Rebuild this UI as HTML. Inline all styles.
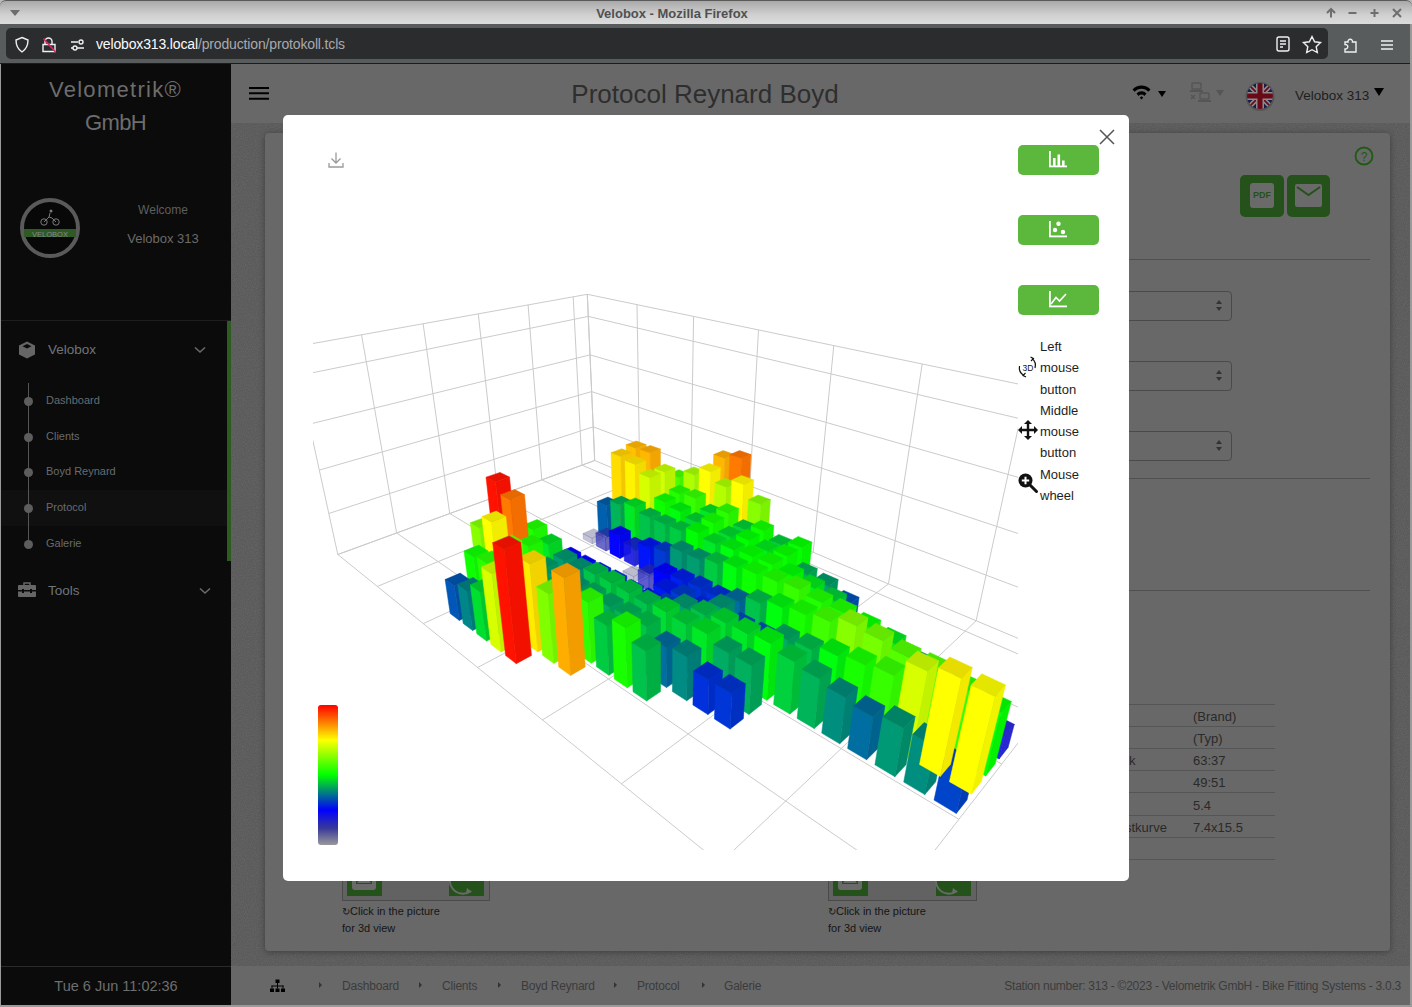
<!DOCTYPE html>
<html><head><meta charset="utf-8">
<style>
*{box-sizing:border-box}
html,body{margin:0;padding:0;width:1412px;height:1007px;overflow:hidden;background:#b9b9b9;font-family:"Liberation Sans",sans-serif}
.a{position:absolute}
#title{left:0;top:0;width:1412px;height:24px;background:linear-gradient(#a9a9a9,#d0d0d0 60%,#dcdcdc);border-top:1px solid #5a5a5a;border-radius:6px 6px 0 0}
#title .t{left:0;width:1344px;top:5px;text-align:center;font-size:13px;font-weight:bold;color:#505050}
#toolbar{left:0;top:24px;width:1412px;height:40px;background:#585c5d}
#url{left:6px;top:28px;width:1322px;height:31px;background:#2b2c2e;border-radius:5px}
#urltext{left:96px;top:36px;font-size:14px;letter-spacing:-0.15px;color:#fbfbfe;white-space:nowrap}
#urltext span{color:#a9a9ad}
#side{left:1px;top:64px;width:230px;height:941px;background:#0b0b0b}
#header{left:231px;top:64px;width:1179px;height:59px;background:#686868}
#content{left:231px;top:123px;width:1179px;height:843px;background:#5c5c5c}
#card{left:265px;top:133px;width:1125px;height:818px;background:#686868;border-radius:4px;box-shadow:0 1px 6px rgba(0,0,0,0.35)}
#footer{left:231px;top:966px;width:1179px;height:39px;background:#686868}
#modal{left:283px;top:115px;width:846px;height:766px;background:#fff;border-radius:5px}
.btn{left:1018px;width:81px;height:30px;background:#5cb83c;border-radius:5px}
.help{left:1040px;font-size:13px;color:#1e1e1e;line-height:21.3px}
.side-t{color:#6e6e6e}
.sub{left:46px;font-size:11px;color:#666b70}
.dot{left:24px;width:9px;height:9px;border-radius:50%;background:#5d5d5d}
.bc{top:979px;font-size:12px;letter-spacing:-0.2px;color:#3b3b3b;white-space:nowrap}
.bca{top:982px;width:0;height:0;border-left:3px solid #333;border-top:3px solid transparent;border-bottom:3px solid transparent}
.tr{left:1129px;width:146px;height:1px;background:#555}
.tv{left:1193px;font-size:13px;color:#2a2a2a}
</style></head><body>
<!-- window title -->
<div class="a" id="title"><div class="a t">Velobox - Mozilla Firefox</div></div>
<svg class="a" style="left:8px;top:8px" width="14" height="10"><path d="M2 2 L12 2 L7 8 Z" fill="#6c6c6c"/></svg>
<svg class="a" style="left:1320px;top:4px" width="90" height="18" fill="none" stroke="#6e6e6e" stroke-width="2">
 <path d="M11 13.5 V5.5 M7 9 L11 5 L15 9"/><path d="M28.5 9 H36.5"/><path d="M50.5 9 H58.5 M54.5 5 V13"/><path d="M73 5 L81 13 M81 5 L73 13"/>
</svg>
<!-- toolbar -->
<div class="a" id="toolbar"></div>
<div class="a" id="url"></div>
<svg class="a" style="left:14px;top:35px" width="80" height="20" fill="none" stroke="#f0f0f0" stroke-width="1.4">
 <path d="M8 2.5 L14 5 Q14 13 8 17 Q2 13 2 5 Z"/>
 <path d="M31 9 V6.5 A3.5 3.5 0 0 1 38 6.5 V9 M29 9.5 H41 V16.5 H29 Z"/>
 <path d="M29.5 3.5 L41.5 17" stroke="#e0245e" stroke-width="1.6"/>
 <path d="M57 7 H64 M57 13 H59 M63 13 H70" /><circle cx="67" cy="7" r="2"/><circle cx="61" cy="13" r="2"/>
</svg>
<div class="a" id="urltext">velobox313.local<span>/production/protokoll.tcls</span></div>
<svg class="a" style="left:1272px;top:33px" width="128" height="24" fill="none" stroke="#f0f0f0" stroke-width="1.4">
 <rect x="5" y="4" width="12" height="14" rx="2"/><path d="M8 8 H14 M8 11 H14 M8 14 H11"/>
 <path d="M40 3.5 L42.6 8.8 L48.5 9.6 L44.2 13.7 L45.3 19.5 L40 16.7 L34.7 19.5 L35.8 13.7 L31.5 9.6 L37.4 8.8 Z"/>
 <path d="M73 9 H76 A2.3 2.3 0 1 1 80.5 9 H84 V19 H73 V16 A2.3 2.3 0 1 0 73 11.5 Z"/>
 <path d="M109 8 H121 M109 12 H121 M109 16 H121"/>
</svg>
<!-- page -->
<div class="a" id="side"></div><div class="a" style="left:0;top:63px;width:1412px;height:1px;background:#1c1c1c"></div>
<div class="a" id="header"></div>
<div class="a" id="content"></div><svg class="a" style="left:231px;top:123px" width="1179" height="843"><filter id="nz"><feTurbulence type="fractalNoise" baseFrequency="0.9" numOctaves="2" seed="3"/><feColorMatrix values="0 0 0 0 0.36  0 0 0 0 0.36  0 0 0 0 0.36  0 0 0 -1.6 1.1"/></filter><rect width="1179" height="843" fill="#5a5a5a"/><rect width="1179" height="843" filter="url(#nz)" opacity="0.18"/></svg>
<div class="a" id="card"></div>
<div class="a" id="footer"></div>
<div class="a" style="left:0;top:64px;width:1px;height:943px;background:#9a9a9a"></div>
<div class="a" style="left:1410px;top:24px;width:2px;height:983px;background:#9a9a9a"></div>
<div class="a" style="left:0;top:1005px;width:1412px;height:2px;background:#9a9a9a"></div>


<!-- sidebar content -->
<div class="a" style="left:0;top:73px;width:231px;text-align:center;font-size:22px;line-height:33px;color:#6d6d6d"><span style="letter-spacing:1.3px">Velometrik®</span><br><span style="letter-spacing:-0.6px">GmbH</span></div>
<svg class="a" style="left:19px;top:197px" width="62" height="62">
 <circle cx="31" cy="31" r="28" fill="#080808" stroke="#5a5a5a" stroke-width="4"/>
 <rect x="5" y="32" width="52" height="8" fill="#2f5a25"/>
 <text x="31" y="39.5" text-anchor="middle" font-size="7.5" font-family="Liberation Sans" fill="#8a8a8a">VELOBOX</text>
 <g fill="none" stroke="#7a7a7a" stroke-width="1"><circle cx="25" cy="25" r="3.2"/><circle cx="37" cy="25" r="3.2"/><path d="M25 25 L30 20 L33 21 L37 25 M30 20 L31 16"/></g>
 <circle cx="32" cy="14" r="1.5" fill="#7a7a7a"/>
</svg>
<div class="a side-t" style="left:100px;top:203px;width:126px;text-align:center;font-size:12px;color:#5e5e5e">Welcome</div>
<div class="a side-t" style="left:100px;top:231px;width:126px;text-align:center;font-size:13px;color:#6a6a6a">Velobox 313</div>
<div class="a" style="left:1px;top:320px;width:230px;height:1px;background:#1e1e1e"></div>
<svg class="a" style="left:17px;top:340px" width="20" height="20"><path d="M10 1.5 L18 5.5 V14.5 L10 18.5 L2 14.5 V5.5 Z" fill="#666"/><path d="M10 4 L14.5 6.3 L10 8.6 L5.5 6.3 Z" fill="#0b0b0b"/></svg>
<div class="a" style="left:48px;top:342px;font-size:13.5px;color:#6f747a">Velobox</div>
<svg class="a" style="left:193px;top:345px" width="14" height="10"><path d="M2 2.5 L7 7 L12 2.5" stroke="#6a6a6a" stroke-width="1.6" fill="none"/></svg>
<div class="a" style="left:227px;top:321px;width:4px;height:240px;background:#2e5b22"></div>
<div class="a" style="left:1px;top:490px;width:226px;height:36px;background:#101010"></div>
<div class="a" style="left:28px;top:383px;width:1px;height:162px;background:#555"></div>
<div class="a dot" style="top:397px"></div><div class="a dot" style="top:433px"></div><div class="a dot" style="top:468px"></div><div class="a dot" style="top:504px"></div><div class="a dot" style="top:540px"></div>
<div class="a sub" style="top:394px">Dashboard</div>
<div class="a sub" style="top:430px">Clients</div>
<div class="a sub" style="top:465px">Boyd Reynard</div>
<div class="a sub" style="top:501px">Protocol</div>
<div class="a sub" style="top:537px">Galerie</div>
<svg class="a" style="left:17px;top:581px" width="20" height="18"><path d="M7 4 V2 H13 V4" stroke="#666" stroke-width="1.5" fill="none"/><rect x="1" y="4" width="18" height="12" rx="1" fill="#666"/><rect x="1" y="9" width="18" height="1.5" fill="#0b0b0b"/><rect x="5" y="8" width="2" height="4" fill="#0b0b0b"/><rect x="13" y="8" width="2" height="4" fill="#0b0b0b"/></svg>
<div class="a" style="left:48px;top:583px;font-size:13.5px;color:#6f747a">Tools</div>
<svg class="a" style="left:198px;top:586px" width="14" height="10"><path d="M2 2.5 L7 7 L12 2.5" stroke="#6a6a6a" stroke-width="1.6" fill="none"/></svg>
<div class="a" style="left:1px;top:966px;width:230px;height:1px;background:#2a2a2a"></div>
<div class="a" style="left:1px;top:978px;width:230px;text-align:center;font-size:14.5px;color:#6e6e6e">Tue 6 Jun 11:02:36</div>

<!-- header content -->
<svg class="a" style="left:248px;top:86px" width="22" height="16"><path d="M1 2 H21 M1 7.3 H21 M1 12.8 H21" stroke="#000" stroke-width="2"/></svg>
<div class="a" style="left:455px;top:79px;width:500px;text-align:center;font-size:26px;color:#2e2e2e">Protocol Reynard Boyd</div>
<svg class="a" style="left:1130px;top:83px" width="40" height="20"><path d="M2.5 6.5 A12 12 0 0 1 20.5 6.5 L18.3 8.8 A9 9 0 0 0 4.7 8.8 Z M6.5 10.6 A6.3 6.3 0 0 1 16.5 10.6 L14.3 12.9 A3.4 3.4 0 0 0 8.7 12.9 Z M9.8 14.8 L11.5 13.3 L13.2 14.8 L11.5 16.6 Z" fill="#000"/><path d="M28 8 H36 L32 14 Z" fill="#000"/></svg>
<svg class="a" style="left:1188px;top:82px" width="40" height="22" fill="#555"><rect x="4" y="1" width="9" height="6" rx="1" fill="none" stroke="#555" stroke-width="1.5"/><rect x="2" y="8" width="13" height="2"/><path d="M3 13 L7 17 M7 13 L3 17" stroke="#555" stroke-width="1.5"/><rect x="12" y="11" width="9" height="6" rx="1" fill="none" stroke="#555" stroke-width="1.5"/><rect x="10" y="18" width="13" height="2"/><path d="M28 8 H36 L32 14 Z" fill="#555"/></svg>
<svg class="a" style="left:1244px;top:80px" width="32" height="32"><defs><clipPath id="fc"><circle cx="16" cy="16" r="13"/></clipPath></defs><circle cx="16" cy="16.5" r="14.5" fill="#4a4a4a" opacity="0.6"/><g clip-path="url(#fc)"><rect width="32" height="32" fill="#141d4a"/><path d="M0 0 L32 32 M32 0 L0 32" stroke="#8a8a8a" stroke-width="5"/><path d="M0 0 L32 32 M32 0 L0 32" stroke="#6a0a18" stroke-width="1.6"/><path d="M16 0 V32 M0 16 H32" stroke="#8a8a8a" stroke-width="8"/><path d="M16 0 V32 M0 16 H32" stroke="#6a0a18" stroke-width="5"/></g></svg>
<div class="a" style="left:1295px;top:88px;font-size:13.5px;color:#1e1e1e">Velobox 313</div>
<svg class="a" style="left:1373px;top:87px" width="12" height="10"><path d="M1 1 H11 L6 9 Z" fill="#000"/></svg>

<!-- card content (behind modal, right side) -->
<svg class="a" style="left:1353px;top:145px" width="22" height="22"><circle cx="11" cy="11" r="8.5" fill="none" stroke="#215a14" stroke-width="1.8"/><text x="11" y="15.5" text-anchor="middle" font-size="12" font-family="Liberation Sans" fill="#215a14">?</text></svg>
<div class="a" style="left:1240px;top:175px;width:44px;height:42px;background:#24521a;border-radius:5px"></div>
<div class="a" style="left:1250px;top:183px;width:24px;height:25px;background:#6a6a6a;border-radius:3px;font-size:9px;font-weight:bold;color:#24521a;text-align:center;line-height:25px">PDF</div>
<div class="a" style="left:1287px;top:175px;width:43px;height:42px;background:#24521a;border-radius:5px"></div>
<svg class="a" style="left:1294px;top:183px" width="29" height="25"><rect x="1" y="1" width="27" height="23" rx="2" fill="#6a6a6a"/><path d="M3 4 L14.5 12 L26 4" stroke="#24521a" stroke-width="2" fill="none"/></svg>
<div class="a" style="left:1129px;top:259px;width:241px;height:1px;background:#505050"></div>
<div class="a" style="left:1100px;top:291px;width:132px;height:30px;border:1px solid #4a4a4a;border-radius:4px"></div>
<div class="a" style="left:1100px;top:361px;width:132px;height:30px;border:1px solid #4a4a4a;border-radius:4px"></div>
<div class="a" style="left:1100px;top:431px;width:132px;height:30px;border:1px solid #4a4a4a;border-radius:4px"></div>
<svg class="a" style="left:1214px;top:298px" width="10" height="160" fill="#333"><path d="M2 6 L5 2 L8 6 Z M2 9 L5 13 L8 9 Z"/><path transform="translate(0,70)" d="M2 6 L5 2 L8 6 Z M2 9 L5 13 L8 9 Z"/><path transform="translate(0,140)" d="M2 6 L5 2 L8 6 Z M2 9 L5 13 L8 9 Z"/></svg>
<div class="a" style="left:1100px;top:478px;width:270px;height:1px;background:#505050"></div>
<div class="a" style="left:1129px;top:590px;width:241px;height:1px;background:#505050"></div>
<div class="a tr" style="top:704px"></div><div class="a tr" style="top:726px"></div><div class="a tr" style="top:748px"></div><div class="a tr" style="top:770px"></div><div class="a tr" style="top:792px"></div><div class="a tr" style="top:815px"></div><div class="a tr" style="top:837px"></div><div class="a tr" style="top:859px"></div>
<div class="a tv" style="top:709px">(Brand)</div>
<div class="a tv" style="top:731px">(Typ)</div>
<div class="a tv" style="top:753px">63:37</div>
<div class="a tv" style="top:775px">49:51</div>
<div class="a tv" style="top:798px">5.4</div>
<div class="a tv" style="top:820px">7.4x15.5</div>
<div class="a tv" style="left:1129px;top:753px">k</div>
<div class="a tv" style="left:1125px;top:820px">stkurve</div>
<!-- thumbnails below modal -->
<div class="a" style="left:342px;top:870px;width:148px;height:31px;border:1px solid #4a4a4a;background:#626262"></div>
<div class="a" style="left:347px;top:870px;width:35px;height:26px;background:#24521a"></div>
<div class="a" style="left:449px;top:870px;width:35px;height:26px;background:#24521a"></div>
<div class="a" style="left:828px;top:870px;width:149px;height:31px;border:1px solid #4a4a4a;background:#626262"></div>
<div class="a" style="left:833px;top:870px;width:35px;height:26px;background:#24521a"></div>
<div class="a" style="left:936px;top:870px;width:35px;height:26px;background:#24521a"></div>

<svg class="a" style="left:347px;top:870px" width="140" height="26"><rect x="5" y="0" width="24" height="20" rx="3" fill="#6a6a6a"/><rect x="9" y="0" width="16" height="14" fill="#24521a"/><path d="M10 13 L15 6 L18 10 L20 8 L24 13 Z" fill="#6a6a6a"/><path d="M108 0 A12 12 0 0 0 124 21" stroke="#6a6a6a" stroke-width="2" fill="none"/><path d="M120 18 L125 22 L119 23" fill="#6a6a6a"/></svg>
<svg class="a" style="left:833px;top:870px" width="140" height="26"><rect x="5" y="0" width="24" height="20" rx="3" fill="#6a6a6a"/><rect x="9" y="0" width="16" height="14" fill="#24521a"/><path d="M10 13 L15 6 L18 10 L20 8 L24 13 Z" fill="#6a6a6a"/><path d="M108 0 A12 12 0 0 0 124 21" stroke="#6a6a6a" stroke-width="2" fill="none"/><path d="M120 18 L125 22 L119 23" fill="#6a6a6a"/></svg>
<div class="a" style="left:342px;top:903px;font-size:11px;line-height:17px;color:#151515"><span style="font-size:10px">&#8635;</span>Click in the picture<br>for 3d view</div>
<div class="a" style="left:828px;top:903px;font-size:11px;line-height:17px;color:#151515"><span style="font-size:10px">&#8635;</span>Click in the picture<br>for 3d view</div>
<!-- footer content -->
<svg class="a" style="left:270px;top:979px" width="15" height="14" fill="#000"><rect x="5.5" y="0.5" width="4" height="3.5"/><rect x="7" y="4" width="1" height="3"/><rect x="1.5" y="6.5" width="12" height="1"/><rect x="1.5" y="6.5" width="1" height="3"/><rect x="12.5" y="6.5" width="1" height="3"/><rect x="7" y="6.5" width="1" height="3"/><rect x="0" y="9.5" width="4" height="3.5"/><rect x="5.5" y="9.5" width="4" height="3.5"/><rect x="11" y="9.5" width="4" height="3.5"/></svg>
<div class="a bca" style="left:319px"></div><div class="a bc" style="left:342px">Dashboard</div>
<div class="a bca" style="left:419px"></div><div class="a bc" style="left:442px">Clients</div>
<div class="a bca" style="left:498px"></div><div class="a bc" style="left:521px">Boyd Reynard</div>
<div class="a bca" style="left:614px"></div><div class="a bc" style="left:637px">Protocol</div>
<div class="a bca" style="left:702px"></div><div class="a bc" style="left:724px">Galerie</div>
<div class="a bc" style="left:951px;width:450px;text-align:right;font-size:12px;letter-spacing:-0.25px">Station number: 313 - ©2023 - Velometrik GmbH - Bike Fitting Systems - 3.0.3</div>

<!-- modal -->
<div class="a" id="modal"></div>
<div class="a btn" style="top:145px"></div>
<div class="a btn" style="top:215px"></div>
<div class="a btn" style="top:285px"></div>
<!-- modal content -->
<svg class="a" style="left:1098px;top:128px" width="18" height="18"><path d="M2 2 L16 16 M16 2 L2 16" stroke="#555" stroke-width="1.5"/></svg>
<svg class="a" style="left:327px;top:151px" width="18" height="18"><path d="M9 1.5 V12 M4.5 7.5 L9 12 L13.5 7.5 M2 12 V16 H16 V12" stroke="#9a9a9a" stroke-width="1.3" fill="none"/></svg>
<svg class="a" style="left:1049px;top:151px" width="18" height="18" fill="#fff"><rect x="0" y="0" width="1.8" height="16"/><rect x="0" y="14.5" width="18" height="1.8"/><rect x="4" y="7" width="2.6" height="8"/><rect x="8.5" y="3.5" width="2.6" height="11.5"/><rect x="13" y="9.5" width="2.6" height="5.5"/></svg>
<svg class="a" style="left:1049px;top:221px" width="18" height="18" fill="#fff"><rect x="0" y="0" width="1.8" height="16"/><rect x="0" y="14.5" width="18" height="1.8"/><circle cx="9.5" cy="2.8" r="2.2"/><circle cx="6" cy="9" r="2.2"/><circle cx="14" cy="11" r="2.2"/></svg>
<svg class="a" style="left:1049px;top:291px" width="18" height="18"><rect x="0" y="0" width="1.8" height="16" fill="#fff"/><rect x="0" y="14.5" width="18" height="1.8" fill="#fff"/><path d="M2 13 L7 6.5 L10.5 10 L17 3" stroke="#fff" stroke-width="1.6" fill="none"/></svg>
<div class="a help" style="top:336px">Left<br>mouse<br>button<br>Middle<br>mouse<br>button<br>Mouse<br>wheel</div>
<svg class="a" style="left:1017px;top:356px" width="22" height="22"><path d="M15 2.5 A9 9 0 0 1 18 12" stroke="#111" stroke-width="1.2" fill="none"/><path d="M13.5 1 L16.5 2.5 L14 5" stroke="#111" stroke-width="1.1" fill="none"/><path d="M7 19.5 A9 9 0 0 1 2.5 10" stroke="#111" stroke-width="1.2" fill="none"/><path d="M9 21 L6 19.5 L8.5 17" stroke="#111" stroke-width="1.1" fill="none"/><text x="11" y="14.5" text-anchor="middle" font-size="8.5" font-family="Liberation Sans" fill="#111">3D</text></svg>
<svg class="a" style="left:1017px;top:419px" width="22" height="22" fill="#111"><path d="M11 1 L15 5 H12.2 V9.8 H17 V7 L21 11 L17 15 V12.2 H12.2 V17 H15 L11 21 L7 17 H9.8 V12.2 H5 V15 L1 11 L5 7 V9.8 H9.8 V5 H7 Z"/></svg>
<svg class="a" style="left:1017px;top:472px" width="22" height="22"><circle cx="8.5" cy="8.5" r="7" fill="#111"/><path d="M13 13 L19.5 19.5" stroke="#111" stroke-width="3" stroke-linecap="round"/><path d="M8.5 4.8 V12.2 M4.8 8.5 H12.2" stroke="#fff" stroke-width="2"/></svg>
<!-- visualMap -->
<div class="a" style="left:318px;top:705px;width:20px;height:140px;border-radius:3px;background:linear-gradient(#ff0000 0%,#ffff00 25%,#00ff00 50%,#0000ff 75%,#38389a 88%,#999999 100%)"></div>

<!--CHART--><svg class="a" style="left:313px;top:115px" width="705" height="735"><g stroke-width="0.5" stroke-linejoin="round"><path d="M24.8 439.5L-20.6 232.2M83.6 418.0L48.5 219.8M136.7 398.5L110.1 208.7M184.9 380.9L165.3 198.8M228.8 364.8L215.1 189.9M269.0 350.1L260.2 181.8M281.7 345.5L274.3 179.3M24.8 439.5L281.7 345.5M15.8 398.5L280.2 311.8M6.3 355.1L278.6 276.6M-3.7 309.2L277.0 239.9M-14.3 260.6L275.3 201.4M-20.6 232.2L274.3 179.3M281.7 345.5L274.3 179.3M326.8 364.4L324.0 189.6M377.5 385.7L380.6 201.4M434.8 409.8L445.5 214.9M500.2 437.3L520.8 230.6M575.5 468.9L609.2 249.0M663.1 505.8L714.4 270.9M766.3 549.1L841.8 297.4M281.7 345.5L766.3 549.1M280.2 311.8L780.8 500.8M278.6 276.6L796.4 448.9M277.0 239.9L813.1 393.2M275.3 201.4L831.1 333.1M274.3 179.3L841.8 297.4M24.8 439.5L281.7 345.5M64.3 471.4L326.8 364.4M110.3 508.6L377.5 385.7M164.6 552.5L434.8 409.8M229.5 604.9L500.2 437.3M308.5 668.8L575.5 468.9M407.0 748.3L663.1 505.8M532.8 850.1L766.3 549.1M24.8 439.5L532.8 850.1M83.6 418.0L594.8 770.2M136.7 398.5L645.9 704.3M184.9 380.9L688.8 649.0M228.8 364.8L725.3 601.9M269.0 350.1L756.8 561.4" stroke="#cbcbcb" stroke-width="1" fill="none"/><path d="M314.9,404.0L324.1,408.4L322.8,333.4L313.1,329.7Z" fill="#ffc100" stroke="#ffc100"/><path d="M324.1,408.4L334.0,403.9L333.1,329.6L322.8,333.4Z" fill="#f2ad00" stroke="#f2ad00"/><path d="M313.1,329.7L322.8,333.4L333.1,329.6L323.4,326.0Z" fill="#e6a400" stroke="#e6a400"/><path d="M300.5,410.4L309.7,415.0L307.7,341.6L298.0,337.7Z" fill="#ffdd00" stroke="#ffdd00"/><path d="M309.7,415.0L319.9,410.3L318.4,337.6L307.7,341.6Z" fill="#f2c600" stroke="#f2c600"/><path d="M298.0,337.7L307.7,341.6L318.4,337.6L308.7,333.8Z" fill="#e6bc00" stroke="#e6bc00"/><path d="M328.2,410.3L337.8,414.9L337.1,338.1L327.0,334.2Z" fill="#ffb700" stroke="#ffb700"/><path d="M337.8,414.9L347.6,410.2L347.4,334.1L337.1,338.1Z" fill="#f2a400" stroke="#f2a400"/><path d="M327.0,334.2L337.1,338.1L347.4,334.1L337.3,330.4Z" fill="#e69c00" stroke="#e69c00"/><path d="M355.9,410.2L365.8,414.7L366.3,362.9L356.0,358.8Z" fill="#4bff00" stroke="#4bff00"/><path d="M365.8,414.7L375.3,410.1L376.1,358.7L366.3,362.9Z" fill="#43f200" stroke="#43f200"/><path d="M356.0,358.8L366.3,362.9L376.1,358.7L365.9,354.7Z" fill="#40e600" stroke="#40e600"/><path d="M285.6,417.1L294.8,421.8L293.7,391.0L284.2,386.5Z" fill="#0060ae" stroke="#0060ae"/><path d="M294.8,421.8L305.3,417.0L304.4,386.4L293.7,391.0Z" fill="#00569c" stroke="#00569c"/><path d="M284.2,386.5L293.7,391.0L304.4,386.4L294.9,382.1Z" fill="#005294" stroke="#005294"/><path d="M313.8,417.0L323.3,421.7L322.0,349.4L312.0,345.4Z" fill="#fff400" stroke="#fff400"/><path d="M323.3,421.7L333.5,416.9L332.7,345.3L322.0,349.4Z" fill="#f2db00" stroke="#f2db00"/><path d="M312.0,345.4L322.0,349.4L332.7,345.3L322.6,341.3Z" fill="#e6d000" stroke="#e6d000"/><path d="M342.0,416.8L351.9,421.5L351.9,357.3L341.6,353.2Z" fill="#cfff00" stroke="#cfff00"/><path d="M351.9,421.5L361.7,416.7L362.1,353.1L351.9,357.3Z" fill="#b9f200" stroke="#b9f200"/><path d="M341.6,353.2L351.9,357.3L362.1,353.1L351.8,349.1Z" fill="#b0e600" stroke="#b0e600"/><path d="M370.1,416.7L380.4,421.4L381.5,360.2L370.9,356.0Z" fill="#aeff00" stroke="#aeff00"/><path d="M380.4,421.4L389.8,416.6L391.4,355.9L381.5,360.2Z" fill="#9cf200" stroke="#9cf200"/><path d="M370.9,356.0L381.5,360.2L391.4,355.9L380.7,351.9Z" fill="#94e600" stroke="#94e600"/><path d="M398.3,416.6L408.8,421.3L411.8,343.5L400.7,339.5Z" fill="#ffb700" stroke="#ffb700"/><path d="M408.8,421.3L418.0,416.5L421.4,339.4L411.8,343.5Z" fill="#f2a400" stroke="#f2a400"/><path d="M400.7,339.5L411.8,343.5L421.4,339.4L410.2,335.6Z" fill="#e69c00" stroke="#e69c00"/><path d="M270.2,424.0L279.4,428.9L279.1,423.3L269.9,418.5Z" fill="#6e6ea3" stroke="#6e6ea3" fill-opacity="0.41" stroke-opacity="0.41"/><path d="M279.4,428.9L290.2,423.9L290.0,418.4L279.1,423.3Z" fill="#636392" stroke="#636392" fill-opacity="0.41" stroke-opacity="0.41"/><path d="M269.9,418.5L279.1,423.3L290.0,418.4L280.8,413.7Z" fill="#5d5d8a" stroke="#5d5d8a" fill-opacity="0.41" stroke-opacity="0.41"/><path d="M298.9,423.9L308.4,428.7L307.3,390.1L297.5,385.6Z" fill="#00b559" stroke="#00b559"/><path d="M308.4,428.7L318.9,423.8L318.1,385.5L307.3,390.1Z" fill="#00a250" stroke="#00a250"/><path d="M297.5,385.6L307.3,390.1L318.1,385.5L308.3,381.1Z" fill="#009a4c" stroke="#009a4c"/><path d="M327.5,423.7L337.4,428.6L336.8,362.7L326.5,358.4Z" fill="#d8ff00" stroke="#d8ff00"/><path d="M337.4,428.6L347.6,423.6L347.4,358.3L336.8,362.7Z" fill="#c2f200" stroke="#c2f200"/><path d="M326.5,358.4L336.8,362.7L347.4,358.3L337.1,354.2Z" fill="#b8e600" stroke="#b8e600"/><path d="M356.2,423.6L366.4,428.5L366.9,379.0L356.3,374.6Z" fill="#21ff00" stroke="#21ff00"/><path d="M366.4,428.5L376.2,423.5L377.0,374.5L366.9,379.0Z" fill="#1df200" stroke="#1df200"/><path d="M356.3,374.6L366.9,379.0L377.0,374.5L366.5,370.2Z" fill="#1ce600" stroke="#1ce600"/><path d="M384.8,423.5L395.4,428.3L397.5,356.9L386.4,352.6Z" fill="#ffff00" stroke="#ffff00"/><path d="M395.4,428.3L404.9,423.4L407.4,352.6L397.5,356.9Z" fill="#f2ec00" stroke="#f2ec00"/><path d="M386.4,352.6L397.5,356.9L407.4,352.6L396.3,348.5Z" fill="#e6e000" stroke="#e6e000"/><path d="M413.5,423.3L424.4,428.2L428.5,343.7L416.9,339.6Z" fill="#ff7a00" stroke="#ff7a00"/><path d="M424.4,428.2L433.5,423.2L438.0,339.6L428.5,343.7Z" fill="#f26e00" stroke="#f26e00"/><path d="M416.9,339.6L428.5,343.7L438.0,339.6L426.5,335.6Z" fill="#e66800" stroke="#e66800"/><path d="M283.4,431.0L293.0,436.0L292.4,422.8L282.8,417.9Z" fill="#3131b7" stroke="#3131b7" fill-opacity="0.72" stroke-opacity="0.72"/><path d="M293.0,436.0L303.8,430.9L303.4,417.8L292.4,422.8Z" fill="#2c2ca4" stroke="#2c2ca4" fill-opacity="0.72" stroke-opacity="0.72"/><path d="M282.8,417.9L292.4,422.8L303.4,417.8L293.8,413.0Z" fill="#29299b" stroke="#29299b" fill-opacity="0.72" stroke-opacity="0.72"/><path d="M312.6,430.9L322.5,435.9L321.6,392.2L311.5,387.5Z" fill="#00e926" stroke="#00e926"/><path d="M322.5,435.9L333.0,430.8L332.5,387.4L321.6,392.2Z" fill="#00d122" stroke="#00d122"/><path d="M311.5,387.5L321.6,392.2L332.5,387.4L322.3,382.9Z" fill="#00c620" stroke="#00c620"/><path d="M341.8,430.7L352.0,435.8L352.0,387.4L341.4,382.8Z" fill="#0eff00" stroke="#0eff00"/><path d="M352.0,435.8L362.2,430.6L362.5,382.7L352.0,387.4Z" fill="#0df200" stroke="#0df200"/><path d="M341.4,382.8L352.0,387.4L362.5,382.7L351.9,378.2Z" fill="#0ce600" stroke="#0ce600"/><path d="M370.9,430.6L381.5,435.6L382.6,383.4L371.6,378.9Z" fill="#38ff00" stroke="#38ff00"/><path d="M381.5,435.6L391.3,430.5L392.7,378.8L382.6,383.4Z" fill="#33f200" stroke="#33f200"/><path d="M371.6,378.9L382.6,383.4L392.7,378.8L381.7,374.3Z" fill="#30e600" stroke="#30e600"/><path d="M400.0,430.5L411.0,435.5L413.5,372.2L402.1,367.7Z" fill="#b3ff00" stroke="#b3ff00"/><path d="M411.0,435.5L420.4,430.4L423.3,367.6L413.5,372.2Z" fill="#a0f200" stroke="#a0f200"/><path d="M402.1,367.7L413.5,372.2L423.3,367.6L411.9,363.3Z" fill="#98e600" stroke="#98e600"/><path d="M297.1,438.2L307.0,443.5L306.3,421.0L296.3,416.0Z" fill="#0505ff" stroke="#0505ff"/><path d="M307.0,443.5L317.9,438.1L317.4,415.9L306.3,421.0Z" fill="#0404ea" stroke="#0404ea"/><path d="M296.3,416.0L306.3,421.0L317.4,415.9L307.4,411.0Z" fill="#0404de" stroke="#0404de"/><path d="M326.8,438.1L337.1,443.3L336.7,402.4L326.1,397.6Z" fill="#00c34b" stroke="#00c34b"/><path d="M337.1,443.3L347.6,438.0L347.5,397.5L336.7,402.4Z" fill="#00af43" stroke="#00af43"/><path d="M326.1,397.6L336.7,402.4L347.5,397.5L337.0,392.7Z" fill="#00a640" stroke="#00a640"/><path d="M356.5,438.0L367.1,443.2L367.6,396.7L356.6,391.9Z" fill="#00ff0e" stroke="#00ff0e"/><path d="M367.1,443.2L377.3,437.9L378.0,391.8L367.6,396.7Z" fill="#00e60d" stroke="#00e60d"/><path d="M356.6,391.9L367.6,396.7L378.0,391.8L367.1,387.2Z" fill="#00da0c" stroke="#00da0c"/><path d="M386.1,437.8L397.1,443.1L398.5,398.7L387.2,393.9Z" fill="#00e926" stroke="#00e926"/><path d="M397.1,443.1L406.9,437.7L408.5,393.8L398.5,398.7Z" fill="#00d122" stroke="#00d122"/><path d="M387.2,393.9L398.5,398.7L408.5,393.8L397.2,389.1Z" fill="#00c620" stroke="#00c620"/><path d="M415.8,437.7L427.1,442.9L430.9,369.5L418.9,365.0Z" fill="#ffff00" stroke="#ffff00"/><path d="M427.1,442.9L436.5,437.6L440.7,364.9L430.9,369.5Z" fill="#f2ec00" stroke="#f2ec00"/><path d="M418.9,365.0L430.9,369.5L440.7,364.9L428.7,360.5Z" fill="#e6e000" stroke="#e6e000"/><path d="M311.3,445.8L321.6,451.2L321.2,432.6L310.8,427.4Z" fill="#1919e2" stroke="#1919e2" fill-opacity="0.92" stroke-opacity="0.92"/><path d="M321.6,451.2L332.5,445.7L332.2,427.3L321.2,432.6Z" fill="#1616ca" stroke="#1616ca" fill-opacity="0.92" stroke-opacity="0.92"/><path d="M310.8,427.4L321.2,432.6L332.2,427.3L321.9,422.1Z" fill="#1515bf" stroke="#1515bf" fill-opacity="0.92" stroke-opacity="0.92"/><path d="M341.5,445.6L352.2,451.0L352.2,409.6L341.3,404.5Z" fill="#00c34b" stroke="#00c34b"/><path d="M352.2,451.0L362.7,445.5L363.0,404.4L352.2,409.6Z" fill="#00af43" stroke="#00af43"/><path d="M341.3,404.5L352.2,409.6L363.0,404.4L352.1,399.5Z" fill="#00a640" stroke="#00a640"/><path d="M371.7,445.5L382.8,450.9L383.7,407.3L372.3,402.3Z" fill="#00db34" stroke="#00db34"/><path d="M382.8,450.9L392.9,445.4L394.1,402.2L383.7,407.3Z" fill="#00c42e" stroke="#00c42e"/><path d="M372.3,402.3L383.7,407.3L394.1,402.2L382.8,397.3Z" fill="#00ba2c" stroke="#00ba2c"/><path d="M401.9,445.3L413.3,450.7L415.5,398.4L403.7,393.5Z" fill="#2aff00" stroke="#2aff00"/><path d="M413.3,450.7L423.1,445.2L425.6,393.4L415.5,398.4Z" fill="#26f200" stroke="#26f200"/><path d="M403.7,393.5L415.5,398.4L425.6,393.4L413.8,388.6Z" fill="#24e600" stroke="#24e600"/><path d="M432.1,445.2L443.9,450.6L447.7,389.5L435.4,384.7Z" fill="#88ff00" stroke="#88ff00"/><path d="M443.9,450.6L453.2,445.1L457.4,384.6L447.7,389.5Z" fill="#7af200" stroke="#7af200"/><path d="M435.4,384.7L447.7,389.5L457.4,384.6L445.1,379.9Z" fill="#74e600" stroke="#74e600"/><path d="M202.8,454.1L211.9,459.8L207.9,417.3L198.6,412.0Z" fill="#00c847" stroke="#00c847"/><path d="M211.9,459.8L224.4,454.0L220.8,411.9L207.9,417.3Z" fill="#00b33f" stroke="#00b33f"/><path d="M198.6,412.0L207.9,417.3L220.8,411.9L211.5,406.8Z" fill="#00aa3c" stroke="#00aa3c"/><path d="M326.1,453.5L336.7,459.2L336.4,433.1L325.6,427.7Z" fill="#0015f9" stroke="#0015f9"/><path d="M336.7,459.2L347.6,453.4L347.5,427.6L336.4,433.1Z" fill="#0013df" stroke="#0013df"/><path d="M325.6,427.7L336.4,433.1L347.5,427.6L336.7,422.4Z" fill="#0012d4" stroke="#0012d4"/><path d="M356.8,453.4L367.8,459.0L368.3,416.1L357.0,410.9Z" fill="#00cc42" stroke="#00cc42"/><path d="M367.8,459.0L378.3,453.3L379.1,410.8L368.3,416.1Z" fill="#00b73b" stroke="#00b73b"/><path d="M357.0,410.9L368.3,416.1L379.1,410.8L367.8,405.7Z" fill="#00ae38" stroke="#00ae38"/><path d="M387.6,453.3L399.0,458.9L400.6,408.1L388.8,402.9Z" fill="#13ff00" stroke="#13ff00"/><path d="M399.0,458.9L409.1,453.2L411.0,402.8L400.6,408.1Z" fill="#11f200" stroke="#11f200"/><path d="M388.8,402.9L400.6,408.1L411.0,402.8L399.2,397.8Z" fill="#10e600" stroke="#10e600"/><path d="M418.3,453.1L430.1,458.7L432.4,414.9L420.3,409.7Z" fill="#00d638" stroke="#00d638"/><path d="M430.1,458.7L439.8,453.0L442.4,409.6L432.4,414.9Z" fill="#00c033" stroke="#00c033"/><path d="M420.3,409.7L432.4,414.9L442.4,409.6L430.2,404.6Z" fill="#00b630" stroke="#00b630"/><path d="M184.4,462.4L193.4,468.2L182.5,367.1L173.0,362.2Z" fill="#ff1300" stroke="#ff1300"/><path d="M193.4,468.2L206.4,462.3L196.5,362.1L182.5,367.1Z" fill="#f21100" stroke="#f21100"/><path d="M173.0,362.2L182.5,367.1L196.5,362.1L187.0,357.4Z" fill="#e61000" stroke="#e61000"/><path d="M215.8,462.2L225.2,468.1L220.7,415.2L211.0,409.8Z" fill="#21ff00" stroke="#21ff00"/><path d="M225.2,468.1L237.8,462.1L233.8,409.7L220.7,415.2Z" fill="#1df200" stroke="#1df200"/><path d="M211.0,409.8L220.7,415.2L233.8,409.7L224.1,404.5Z" fill="#1ce600" stroke="#1ce600"/><path d="M247.2,462.1L257.0,467.9L255.4,443.2L245.5,437.6Z" fill="#0002ff" stroke="#0002ff"/><path d="M257.0,467.9L269.2,462.0L267.8,437.5L255.4,443.2Z" fill="#0002f0" stroke="#0002f0"/><path d="M245.5,437.6L255.4,443.2L267.8,437.5L257.9,432.1Z" fill="#0002e4" stroke="#0002e4"/><path d="M310.0,461.8L320.6,467.6L320.5,461.7L309.8,455.9Z" fill="#6e6ea3" stroke="#6e6ea3" fill-opacity="0.41" stroke-opacity="0.41"/><path d="M320.6,467.6L331.9,461.7L331.8,455.8L320.5,461.7Z" fill="#636392" stroke="#636392" fill-opacity="0.41" stroke-opacity="0.41"/><path d="M309.8,455.9L320.5,461.7L331.8,455.8L321.2,450.2Z" fill="#5d5d8a" stroke="#5d5d8a" fill-opacity="0.41" stroke-opacity="0.41"/><path d="M341.3,461.6L352.4,467.5L352.4,437.6L341.1,432.0Z" fill="#003bd4" stroke="#003bd4"/><path d="M352.4,467.5L363.3,461.5L363.5,431.9L352.4,437.6Z" fill="#0035be" stroke="#0035be"/><path d="M341.1,432.0L352.4,437.6L363.5,431.9L352.2,426.5Z" fill="#0032b4" stroke="#0032b4"/><path d="M372.7,461.5L384.1,467.3L385.2,418.0L373.4,412.7Z" fill="#00ff05" stroke="#00ff05"/><path d="M384.1,467.3L394.6,461.4L396.0,412.6L385.2,418.0Z" fill="#00ee04" stroke="#00ee04"/><path d="M373.4,412.7L385.2,418.0L396.0,412.6L384.2,407.3Z" fill="#00e204" stroke="#00e204"/><path d="M404.0,461.3L415.8,467.2L417.8,421.9L405.6,416.5Z" fill="#00df2f" stroke="#00df2f"/><path d="M415.8,467.2L425.9,461.2L428.1,416.4L417.8,421.9Z" fill="#00c82a" stroke="#00c82a"/><path d="M405.6,416.5L417.8,421.9L428.1,416.4L415.9,411.1Z" fill="#00be28" stroke="#00be28"/><path d="M435.3,461.2L447.5,467.0L450.9,415.9L438.2,410.6Z" fill="#0eff00" stroke="#0eff00"/><path d="M447.5,467.0L457.2,461.1L460.8,410.5L450.9,415.9Z" fill="#0df200" stroke="#0df200"/><path d="M438.2,410.6L450.9,415.9L460.8,410.5L448.1,405.3Z" fill="#0ce600" stroke="#0ce600"/><path d="M165.3,470.9L174.2,477.0L166.4,413.3L157.3,407.8Z" fill="#88ff00" stroke="#88ff00"/><path d="M174.2,477.0L187.7,470.8L180.6,407.7L166.4,413.3Z" fill="#7af200" stroke="#7af200"/><path d="M157.3,407.8L166.4,413.3L180.6,407.7L171.4,402.4Z" fill="#74e600" stroke="#74e600"/><path d="M197.3,470.8L206.6,476.9L197.5,384.9L187.7,379.7Z" fill="#ff7a00" stroke="#ff7a00"/><path d="M206.6,476.9L219.7,470.7L211.5,379.6L197.5,384.9Z" fill="#f26e00" stroke="#f26e00"/><path d="M187.7,379.7L197.5,384.9L211.5,379.6L201.7,374.6Z" fill="#e66800" stroke="#e66800"/><path d="M229.3,470.6L239.1,476.7L235.5,429.9L225.4,424.2Z" fill="#00e926" stroke="#00e926"/><path d="M239.1,476.7L251.7,470.5L248.6,424.1L235.5,429.9Z" fill="#00d122" stroke="#00d122"/><path d="M225.4,424.2L235.5,429.9L248.6,424.1L238.5,418.7Z" fill="#00c620" stroke="#00c620"/><path d="M261.3,470.5L271.5,476.5L270.1,451.5L259.8,445.7Z" fill="#0002ff" stroke="#0002ff"/><path d="M271.5,476.5L283.7,470.4L282.5,445.6L270.1,451.5Z" fill="#0002f0" stroke="#0002f0"/><path d="M259.8,445.7L270.1,451.5L282.5,445.6L272.2,439.9Z" fill="#0002e4" stroke="#0002e4"/><path d="M325.2,470.2L336.3,476.2L336.1,460.8L325.0,454.9Z" fill="#2b2bc1" stroke="#2b2bc1" fill-opacity="0.77" stroke-opacity="0.77"/><path d="M336.3,476.2L347.6,470.1L347.6,454.8L336.1,460.8Z" fill="#2626ad" stroke="#2626ad" fill-opacity="0.77" stroke-opacity="0.77"/><path d="M325.0,454.9L336.1,460.8L347.6,454.8L336.4,449.0Z" fill="#2424a4" stroke="#2424a4" fill-opacity="0.77" stroke-opacity="0.77"/><path d="M357.2,470.0L368.6,476.1L369.1,436.9L357.3,431.2Z" fill="#009976" stroke="#009976"/><path d="M368.6,476.1L379.5,469.9L380.3,431.1L369.1,436.9Z" fill="#008969" stroke="#008969"/><path d="M357.3,431.2L369.1,436.9L380.3,431.1L368.5,425.6Z" fill="#008264" stroke="#008264"/><path d="M389.1,469.9L401.0,475.9L402.6,429.1L390.3,423.5Z" fill="#00e926" stroke="#00e926"/><path d="M401.0,475.9L411.4,469.7L413.3,423.4L402.6,429.1Z" fill="#00d122" stroke="#00d122"/><path d="M390.3,423.5L402.6,429.1L413.3,423.4L401.1,417.9Z" fill="#00c620" stroke="#00c620"/><path d="M421.0,469.7L433.3,475.7L436.1,425.3L423.4,419.8Z" fill="#00ff00" stroke="#00ff00"/><path d="M433.3,475.7L443.3,469.6L446.5,419.7L436.1,425.3Z" fill="#00f200" stroke="#00f200"/><path d="M423.4,419.8L436.1,425.3L446.5,419.7L433.7,414.2Z" fill="#00e600" stroke="#00e600"/><path d="M452.9,469.5L465.6,475.6L469.1,430.6L456.0,425.0Z" fill="#00d638" stroke="#00d638"/><path d="M465.6,475.6L475.2,469.4L479.0,424.9L469.1,430.6Z" fill="#00c033" stroke="#00c033"/><path d="M456.0,425.0L469.1,430.6L479.0,424.9L465.8,419.4Z" fill="#00b630" stroke="#00b630"/><path d="M178.1,479.7L187.3,486.0L178.4,407.1L168.8,401.6Z" fill="#ffff00" stroke="#ffff00"/><path d="M187.3,486.0L200.9,479.6L192.8,401.5L178.4,407.1Z" fill="#f2ec00" stroke="#f2ec00"/><path d="M168.8,401.6L178.4,407.1L192.8,401.5L183.2,396.1Z" fill="#e6e000" stroke="#e6e000"/><path d="M210.7,479.5L220.4,485.8L215.5,431.4L205.5,425.6Z" fill="#21ff00" stroke="#21ff00"/><path d="M220.4,485.8L233.5,479.4L229.2,425.5L215.5,431.4Z" fill="#1df200" stroke="#1df200"/><path d="M205.5,425.6L215.5,431.4L229.2,425.5L219.1,419.9Z" fill="#1ce600" stroke="#1ce600"/><path d="M243.3,479.4L253.5,485.7L250.7,445.5L240.4,439.5Z" fill="#009d71" stroke="#009d71"/><path d="M253.5,485.7L266.2,479.2L263.8,439.4L250.7,445.5Z" fill="#008d65" stroke="#008d65"/><path d="M240.4,439.5L250.7,445.5L263.8,439.4L253.4,433.7Z" fill="#008660" stroke="#008660"/><path d="M275.9,479.2L286.5,485.5L285.3,459.3L274.6,453.2Z" fill="#000cff" stroke="#000cff"/><path d="M286.5,485.5L298.7,479.1L297.8,453.1L285.3,459.3Z" fill="#000be8" stroke="#000be8"/><path d="M274.6,453.2L285.3,459.3L297.8,453.1L287.0,447.2Z" fill="#000adc" stroke="#000adc"/><path d="M341.1,478.9L352.5,485.2L352.6,459.8L340.9,453.8Z" fill="#0002ff" stroke="#0002ff"/><path d="M352.5,485.2L363.9,478.8L364.1,453.7L352.6,459.8Z" fill="#0002f0" stroke="#0002f0"/><path d="M340.9,453.8L352.6,459.8L364.1,453.7L352.4,447.8Z" fill="#0002e4" stroke="#0002e4"/><path d="M373.6,478.7L385.5,485.0L386.5,444.8L374.2,438.9Z" fill="#009d71" stroke="#009d71"/><path d="M385.5,485.0L396.4,478.6L397.6,438.8L386.5,444.8Z" fill="#008d65" stroke="#008d65"/><path d="M374.2,438.9L386.5,444.8L397.6,438.8L385.4,433.1Z" fill="#008660" stroke="#008660"/><path d="M406.2,478.6L418.5,484.8L420.8,435.1L408.0,429.3Z" fill="#00ff0e" stroke="#00ff0e"/><path d="M418.5,484.8L428.9,478.4L431.6,429.2L420.8,435.1Z" fill="#00e60d" stroke="#00e60d"/><path d="M408.0,429.3L420.8,435.1L431.6,429.2L418.8,423.5Z" fill="#00da0c" stroke="#00da0c"/><path d="M438.7,478.4L451.5,484.7L454.8,436.3L441.6,430.5Z" fill="#00f21c" stroke="#00f21c"/><path d="M451.5,484.7L461.4,478.3L465.0,430.4L454.8,436.3Z" fill="#00d919" stroke="#00d919"/><path d="M441.6,430.5L454.8,436.3L465.0,430.4L451.8,424.7Z" fill="#00ce18" stroke="#00ce18"/><path d="M471.2,478.2L484.4,484.5L489.1,432.9L475.4,427.2Z" fill="#05ff00" stroke="#05ff00"/><path d="M484.4,484.5L493.9,478.1L498.9,427.1L489.1,432.9Z" fill="#04f200" stroke="#04f200"/><path d="M475.4,427.2L489.1,432.9L498.9,427.1L485.2,421.4Z" fill="#04e600" stroke="#04e600"/><path d="M158.1,488.9L167.2,495.5L160.4,442.2L151.0,436.1Z" fill="#0eff00" stroke="#0eff00"/><path d="M167.2,495.5L181.4,488.8L175.1,436.0L160.4,442.2Z" fill="#0df200" stroke="#0df200"/><path d="M151.0,436.1L160.4,442.2L175.1,436.0L165.7,430.1Z" fill="#0ce600" stroke="#0ce600"/><path d="M191.4,488.8L201.0,495.3L194.3,431.6L184.4,425.7Z" fill="#76ff00" stroke="#76ff00"/><path d="M201.0,495.3L214.7,488.6L208.7,425.6L194.3,431.6Z" fill="#69f200" stroke="#69f200"/><path d="M184.4,425.7L194.3,431.6L208.7,425.6L198.7,419.8Z" fill="#64e600" stroke="#64e600"/><path d="M224.6,488.6L234.7,495.2L231.4,453.9L221.0,447.8Z" fill="#00a26c" stroke="#00a26c"/><path d="M234.7,495.2L247.9,488.5L245.0,447.7L231.4,453.9Z" fill="#009161" stroke="#009161"/><path d="M221.0,447.8L231.4,453.9L245.0,447.7L234.6,441.7Z" fill="#008a5c" stroke="#008a5c"/><path d="M257.9,488.4L268.4,495.0L266.1,454.7L255.3,448.5Z" fill="#009976" stroke="#009976"/><path d="M268.4,495.0L281.2,488.3L279.2,448.4L266.1,454.7Z" fill="#008969" stroke="#008969"/><path d="M255.3,448.5L266.1,454.7L279.2,448.4L268.4,442.4Z" fill="#008264" stroke="#008264"/><path d="M291.1,488.3L302.1,494.8L301.2,467.3L290.0,461.0Z" fill="#0015f9" stroke="#0015f9"/><path d="M302.1,494.8L314.4,488.1L313.7,460.9L301.2,467.3Z" fill="#0013df" stroke="#0013df"/><path d="M290.0,461.0L301.2,467.3L313.7,460.9L302.5,454.8Z" fill="#0012d4" stroke="#0012d4"/><path d="M357.6,487.9L369.5,494.5L369.8,466.1L357.7,459.8Z" fill="#001ff0" stroke="#001ff0"/><path d="M369.5,494.5L380.8,487.8L381.4,459.7L369.8,466.1Z" fill="#001bd7" stroke="#001bd7"/><path d="M357.7,459.8L369.8,466.1L381.4,459.7L369.2,453.6Z" fill="#001acc" stroke="#001acc"/><path d="M390.7,487.8L403.1,494.3L404.7,449.0L392.0,442.9Z" fill="#00cc42" stroke="#00cc42"/><path d="M403.1,494.3L414.0,487.6L415.9,442.7L404.7,449.0Z" fill="#00b73b" stroke="#00b73b"/><path d="M392.0,442.9L404.7,449.0L415.9,442.7L403.1,436.8Z" fill="#00ae38" stroke="#00ae38"/><path d="M423.9,487.6L436.7,494.1L439.9,441.8L426.5,435.8Z" fill="#05ff00" stroke="#05ff00"/><path d="M436.7,494.1L447.1,487.5L450.5,435.7L439.9,441.8Z" fill="#04f200" stroke="#04f200"/><path d="M426.5,435.8L439.9,441.8L450.5,435.7L437.2,429.8Z" fill="#04e600" stroke="#04e600"/><path d="M457.1,487.4L470.4,494.0L474.7,441.2L460.9,435.2Z" fill="#09ff00" stroke="#09ff00"/><path d="M470.4,494.0L480.2,487.3L484.9,435.1L474.7,441.2Z" fill="#08f200" stroke="#08f200"/><path d="M460.9,435.2L474.7,441.2L484.9,435.1L471.1,429.2Z" fill="#08e600" stroke="#08e600"/><path d="M137.2,498.6L146.3,505.4L141.3,471.0L132.1,464.5Z" fill="#0057b7" stroke="#0057b7"/><path d="M146.3,505.4L161.0,498.4L156.5,464.4L141.3,471.0Z" fill="#004ea4" stroke="#004ea4"/><path d="M132.1,464.5L141.3,471.0L156.5,464.4L147.2,458.1Z" fill="#004a9c" stroke="#004a9c"/><path d="M171.2,498.4L180.7,505.2L173.9,448.3L164.1,442.0Z" fill="#2aff00" stroke="#2aff00"/><path d="M180.7,505.2L195.0,498.3L188.8,441.9L173.9,448.3Z" fill="#26f200" stroke="#26f200"/><path d="M164.1,442.0L173.9,448.3L188.8,441.9L179.0,435.8Z" fill="#24e600" stroke="#24e600"/><path d="M205.2,498.2L215.2,505.1L210.6,457.1L200.3,450.8Z" fill="#00df2f" stroke="#00df2f"/><path d="M215.2,505.1L228.9,498.1L224.9,450.7L210.6,457.1Z" fill="#00c82a" stroke="#00c82a"/><path d="M200.3,450.8L210.6,457.1L224.9,450.7L214.6,444.5Z" fill="#00be28" stroke="#00be28"/><path d="M239.1,498.0L249.6,504.9L246.7,464.0L235.9,457.6Z" fill="#009976" stroke="#009976"/><path d="M249.6,504.9L262.9,497.9L260.4,457.5L246.7,464.0Z" fill="#008969" stroke="#008969"/><path d="M235.9,457.6L246.7,464.0L260.4,457.5L249.6,451.2Z" fill="#008264" stroke="#008264"/><path d="M273.0,497.9L284.0,504.7L281.9,459.6L270.6,453.2Z" fill="#00c34b" stroke="#00c34b"/><path d="M284.0,504.7L296.8,497.7L295.1,453.1L281.9,459.6Z" fill="#00af43" stroke="#00af43"/><path d="M270.6,453.2L281.9,459.6L295.1,453.1L283.8,446.9Z" fill="#00a640" stroke="#00a640"/><path d="M306.9,497.7L318.4,504.5L317.8,477.5L306.1,471.0Z" fill="#000cff" stroke="#000cff"/><path d="M318.4,504.5L330.7,497.6L330.3,470.9L317.8,477.5Z" fill="#000be8" stroke="#000be8"/><path d="M306.1,471.0L317.8,477.5L330.3,470.9L318.6,464.5Z" fill="#000adc" stroke="#000adc"/><path d="M340.8,497.5L352.7,504.3L352.8,476.0L340.6,469.4Z" fill="#001af4" stroke="#001af4"/><path d="M352.7,504.3L364.5,497.4L364.8,469.3L352.8,476.0Z" fill="#0017db" stroke="#0017db"/><path d="M340.6,469.4L352.8,476.0L364.8,469.3L352.6,463.0Z" fill="#0016d0" stroke="#0016d0"/><path d="M374.7,497.3L387.1,504.2L387.9,473.5L375.2,467.0Z" fill="#0031dd" stroke="#0031dd"/><path d="M387.1,504.2L398.4,497.2L399.4,466.9L387.9,473.5Z" fill="#002cc6" stroke="#002cc6"/><path d="M375.2,467.0L387.9,473.5L399.4,466.9L386.7,460.5Z" fill="#002abc" stroke="#002abc"/><path d="M408.5,497.2L421.4,504.0L423.9,452.8L410.5,446.5Z" fill="#00ff0e" stroke="#00ff0e"/><path d="M421.4,504.0L432.2,497.1L435.1,446.4L423.9,452.8Z" fill="#00e60d" stroke="#00e60d"/><path d="M410.5,446.5L423.9,452.8L435.1,446.4L421.7,440.3Z" fill="#00da0c" stroke="#00da0c"/><path d="M442.4,497.0L455.7,503.8L459.7,449.8L445.7,443.5Z" fill="#0eff00" stroke="#0eff00"/><path d="M455.7,503.8L466.0,496.9L470.3,443.4L459.7,449.8Z" fill="#0df200" stroke="#0df200"/><path d="M445.7,443.5L459.7,449.8L470.3,443.4L456.4,437.3Z" fill="#0ce600" stroke="#0ce600"/><path d="M476.2,496.8L490.0,503.6L494.2,460.0L479.9,453.6Z" fill="#00b559" stroke="#00b559"/><path d="M490.0,503.6L499.8,496.7L504.3,453.5L494.2,460.0Z" fill="#00a250" stroke="#00a250"/><path d="M479.9,453.6L494.2,460.0L504.3,453.5L490.0,447.3Z" fill="#009a4c" stroke="#009a4c"/><path d="M150.2,508.4L159.6,515.5L154.3,476.0L144.7,469.2Z" fill="#008688" stroke="#008688"/><path d="M159.6,515.5L174.5,508.3L169.6,469.1L154.3,476.0Z" fill="#00787a" stroke="#00787a"/><path d="M144.7,469.2L154.3,476.0L169.6,469.1L160.0,462.5Z" fill="#007274" stroke="#007274"/><path d="M184.9,508.2L194.8,515.4L188.6,459.5L178.4,453.0Z" fill="#18ff00" stroke="#18ff00"/><path d="M194.8,515.4L209.2,508.1L203.6,452.8L188.6,459.5Z" fill="#15f200" stroke="#15f200"/><path d="M178.4,453.0L188.6,459.5L203.6,452.8L193.4,446.5Z" fill="#14e600" stroke="#14e600"/><path d="M219.6,508.0L230.0,515.2L226.2,471.3L215.5,464.7Z" fill="#00b05e" stroke="#00b05e"/><path d="M230.0,515.2L243.8,507.9L240.5,464.5L226.2,471.3Z" fill="#009e54" stroke="#009e54"/><path d="M215.5,464.7L226.2,471.3L240.5,464.5L229.8,458.0Z" fill="#009650" stroke="#009650"/><path d="M254.2,507.9L265.1,515.0L262.6,473.5L251.4,466.8Z" fill="#009976" stroke="#009976"/><path d="M265.1,515.0L278.4,507.7L276.3,466.7L262.6,473.5Z" fill="#008969" stroke="#008969"/><path d="M251.4,466.8L262.6,473.5L276.3,466.7L265.1,460.2Z" fill="#008264" stroke="#008264"/><path d="M288.8,507.7L300.2,514.8L298.5,468.1L286.8,461.5Z" fill="#00cc42" stroke="#00cc42"/><path d="M300.2,514.8L313.0,507.6L311.8,461.4L298.5,468.1Z" fill="#00b73b" stroke="#00b73b"/><path d="M286.8,461.5L298.5,468.1L311.8,461.4L300.0,454.9Z" fill="#00ae38" stroke="#00ae38"/><path d="M323.4,507.5L335.3,514.6L335.0,486.3L322.8,479.5Z" fill="#0015f9" stroke="#0015f9"/><path d="M335.3,514.6L347.6,507.4L347.5,479.4L335.0,486.3Z" fill="#0013df" stroke="#0013df"/><path d="M322.8,479.5L335.0,486.3L347.5,479.4L335.4,472.7Z" fill="#0012d4" stroke="#0012d4"/><path d="M358.0,507.3L370.4,514.4L370.8,482.4L358.1,475.6Z" fill="#003bd4" stroke="#003bd4"/><path d="M370.4,514.4L382.2,507.2L382.8,475.5L370.8,482.4Z" fill="#0035be" stroke="#0035be"/><path d="M358.1,475.6L370.8,482.4L382.8,475.5L370.1,468.9Z" fill="#0032b4" stroke="#0032b4"/><path d="M392.5,507.2L405.4,514.3L406.6,483.2L393.4,476.4Z" fill="#0031dd" stroke="#0031dd"/><path d="M405.4,514.3L416.7,507.0L418.1,476.3L406.6,483.2Z" fill="#002cc6" stroke="#002cc6"/><path d="M393.4,476.4L406.6,483.2L418.1,476.3L404.9,469.7Z" fill="#002abc" stroke="#002abc"/><path d="M427.1,507.0L440.5,514.1L443.9,459.3L429.9,452.7Z" fill="#0eff00" stroke="#0eff00"/><path d="M440.5,514.1L451.2,506.8L455.0,452.6L443.9,459.3Z" fill="#0df200" stroke="#0df200"/><path d="M429.9,452.7L443.9,459.3L455.0,452.6L441.1,446.2Z" fill="#0ce600" stroke="#0ce600"/><path d="M461.6,506.8L475.5,513.9L480.1,461.0L465.6,454.5Z" fill="#00ff05" stroke="#00ff05"/><path d="M475.5,513.9L485.7,506.7L490.7,454.3L480.1,461.0Z" fill="#00ee04" stroke="#00ee04"/><path d="M465.6,454.5L480.1,461.0L490.7,454.3L476.2,448.0Z" fill="#00e204" stroke="#00e204"/><path d="M496.1,506.6L510.5,513.7L515.2,471.4L500.3,464.7Z" fill="#00a26c" stroke="#00a26c"/><path d="M510.5,513.7L520.2,506.5L525.2,464.6L515.2,471.4Z" fill="#009161" stroke="#009161"/><path d="M500.3,464.7L515.2,471.4L525.2,464.6L510.3,458.1Z" fill="#008a5c" stroke="#008a5c"/><path d="M163.8,518.7L173.6,526.1L167.3,476.8L157.3,469.8Z" fill="#00df2f" stroke="#00df2f"/><path d="M173.6,526.1L188.5,518.5L182.9,469.7L167.3,476.8Z" fill="#00c82a" stroke="#00c82a"/><path d="M157.3,469.8L167.3,476.8L182.9,469.7L172.8,463.0Z" fill="#00be28" stroke="#00be28"/><path d="M199.2,518.5L209.5,525.9L203.3,464.4L192.6,457.5Z" fill="#47ff00" stroke="#47ff00"/><path d="M209.5,525.9L223.9,518.4L218.4,457.4L203.3,464.4Z" fill="#3ff200" stroke="#3ff200"/><path d="M192.6,457.5L203.3,464.4L218.4,457.4L207.7,450.8Z" fill="#3ce600" stroke="#3ce600"/><path d="M234.5,518.3L245.4,525.7L242.1,481.3L230.9,474.3Z" fill="#00b05e" stroke="#00b05e"/><path d="M245.4,525.7L259.3,518.2L256.4,474.2L242.1,481.3Z" fill="#009e54" stroke="#009e54"/><path d="M230.9,474.3L242.1,481.3L256.4,474.2L245.2,467.4Z" fill="#009650" stroke="#009650"/><path d="M269.9,518.1L281.3,525.5L279.1,481.1L267.4,474.1Z" fill="#00b05e" stroke="#00b05e"/><path d="M281.3,525.5L294.6,518.0L292.9,474.0L279.1,481.1Z" fill="#009e54" stroke="#009e54"/><path d="M267.4,474.1L279.1,481.1L292.9,474.0L281.1,467.2Z" fill="#009650" stroke="#009650"/><path d="M305.2,517.9L317.1,525.3L316.0,478.0L303.7,471.1Z" fill="#00cc42" stroke="#00cc42"/><path d="M317.1,525.3L329.9,517.8L329.2,470.9L316.0,478.0Z" fill="#00b73b" stroke="#00b73b"/><path d="M303.7,471.1L316.0,478.0L329.2,470.9L316.9,464.2Z" fill="#00ae38" stroke="#00ae38"/><path d="M340.5,517.7L353.0,525.2L353.0,491.7L340.3,484.6Z" fill="#0044ca" stroke="#0044ca"/><path d="M353.0,525.2L365.2,517.6L365.6,484.5L353.0,491.7Z" fill="#003db5" stroke="#003db5"/><path d="M340.3,484.6L353.0,491.7L365.6,484.5L352.8,477.6Z" fill="#003aac" stroke="#003aac"/><path d="M375.8,517.6L388.8,525.0L389.6,494.4L376.4,487.3Z" fill="#0028e6" stroke="#0028e6"/><path d="M388.8,525.0L400.5,517.4L401.6,487.2L389.6,494.4Z" fill="#0024ce" stroke="#0024ce"/><path d="M376.4,487.3L389.6,494.4L401.6,487.2L388.3,480.3Z" fill="#0022c4" stroke="#0022c4"/><path d="M411.1,517.4L424.6,524.8L426.5,487.1L412.7,480.0Z" fill="#006ea0" stroke="#006ea0"/><path d="M424.6,524.8L435.8,517.2L438.0,479.9L426.5,487.1Z" fill="#00638f" stroke="#00638f"/><path d="M412.7,480.0L426.5,487.1L438.0,479.9L424.2,473.1Z" fill="#005e88" stroke="#005e88"/><path d="M446.4,517.2L460.3,524.6L464.8,467.0L450.2,460.2Z" fill="#21ff00" stroke="#21ff00"/><path d="M460.3,524.6L471.0,517.1L475.8,460.1L464.8,467.0Z" fill="#1df200" stroke="#1df200"/><path d="M450.2,460.2L464.8,467.0L475.8,460.1L461.3,453.5Z" fill="#1ce600" stroke="#1ce600"/><path d="M481.6,517.0L496.1,524.4L501.4,473.2L486.2,466.3Z" fill="#00f21c" stroke="#00f21c"/><path d="M496.1,524.4L506.2,516.9L511.8,466.2L501.4,473.2Z" fill="#00d919" stroke="#00d919"/><path d="M486.2,466.3L501.4,473.2L511.8,466.2L496.7,459.5Z" fill="#00ce18" stroke="#00ce18"/><path d="M516.8,516.8L531.8,524.2L536.3,489.4L520.8,482.3Z" fill="#0052bc" stroke="#0052bc"/><path d="M531.8,524.2L541.4,516.7L546.1,482.2L536.3,489.4Z" fill="#004aa9" stroke="#004aa9"/><path d="M520.8,482.3L536.3,489.4L546.1,482.2L530.7,475.4Z" fill="#0046a0" stroke="#0046a0"/><path d="M177.9,529.4L188.1,537.1L179.0,458.9L168.3,452.0Z" fill="#d8ff00" stroke="#d8ff00"/><path d="M188.1,537.1L203.2,529.2L195.0,451.8L179.0,458.9Z" fill="#c2f200" stroke="#c2f200"/><path d="M168.3,452.0L179.0,458.9L195.0,451.8L184.3,445.1Z" fill="#b8e600" stroke="#b8e600"/><path d="M214.0,529.2L224.8,536.9L216.8,448.9L205.5,442.1Z" fill="#ffeb00" stroke="#ffeb00"/><path d="M224.8,536.9L239.3,529.0L232.4,442.0L216.8,448.9Z" fill="#f2d300" stroke="#f2d300"/><path d="M205.5,442.1L216.8,448.9L232.4,442.0L221.0,435.3Z" fill="#e6c800" stroke="#e6c800"/><path d="M250.2,529.0L261.5,536.7L258.4,489.2L246.8,481.9Z" fill="#00c847" stroke="#00c847"/><path d="M261.5,536.7L275.4,528.8L272.9,481.8L258.4,489.2Z" fill="#00b33f" stroke="#00b33f"/><path d="M246.8,481.9L258.4,489.2L272.9,481.8L261.2,474.7Z" fill="#00aa3c" stroke="#00aa3c"/><path d="M286.3,528.8L298.2,536.5L296.5,491.9L284.2,484.6Z" fill="#00ac63" stroke="#00ac63"/><path d="M298.2,536.5L311.5,528.7L310.3,484.5L296.5,491.9Z" fill="#009a58" stroke="#009a58"/><path d="M284.2,484.6L296.5,491.9L310.3,484.5L298.0,477.4Z" fill="#009254" stroke="#009254"/><path d="M322.4,528.6L334.8,536.3L334.2,489.3L321.4,482.0Z" fill="#00c34b" stroke="#00c34b"/><path d="M334.8,536.3L347.6,528.5L347.5,481.9L334.2,489.3Z" fill="#00af43" stroke="#00af43"/><path d="M321.4,482.0L334.2,489.3L347.5,481.9L334.6,474.8Z" fill="#00a640" stroke="#00a640"/><path d="M358.4,528.4L371.4,536.1L372.0,493.0L358.6,485.7Z" fill="#009d71" stroke="#009d71"/><path d="M371.4,536.1L383.6,528.3L384.6,485.6L372.0,493.0Z" fill="#008d65" stroke="#008d65"/><path d="M358.6,485.7L372.0,493.0L384.6,485.6L371.3,478.5Z" fill="#008660" stroke="#008660"/><path d="M394.5,528.2L408.0,535.9L409.7,493.3L395.7,486.0Z" fill="#009976" stroke="#009976"/><path d="M408.0,535.9L419.7,528.1L421.7,485.9L409.7,493.3Z" fill="#008969" stroke="#008969"/><path d="M395.7,486.0L409.7,493.3L421.7,485.9L407.8,478.8Z" fill="#008264" stroke="#008264"/><path d="M430.5,528.0L444.5,535.8L447.7,488.7L433.1,481.5Z" fill="#00c34b" stroke="#00c34b"/><path d="M444.5,535.8L455.7,527.9L459.1,481.3L447.7,488.7Z" fill="#00af43" stroke="#00af43"/><path d="M433.1,481.5L447.7,488.7L459.1,481.3L444.6,474.3Z" fill="#00a640" stroke="#00a640"/><path d="M466.5,527.8L481.1,535.6L486.7,474.7L471.4,467.6Z" fill="#38ff00" stroke="#38ff00"/><path d="M481.1,535.6L491.7,527.7L497.7,467.4L486.7,474.7Z" fill="#33f200" stroke="#33f200"/><path d="M471.4,467.6L486.7,474.7L497.7,467.4L482.4,460.5Z" fill="#30e600" stroke="#30e600"/><path d="M502.5,527.6L517.6,535.4L523.4,486.4L507.7,479.2Z" fill="#00d638" stroke="#00d638"/><path d="M517.6,535.4L527.6,527.5L533.7,479.0L523.4,486.4Z" fill="#00c033" stroke="#00c033"/><path d="M507.7,479.2L523.4,486.4L533.7,479.0L518.0,472.0Z" fill="#00b630" stroke="#00b630"/><path d="M192.6,540.5L203.3,548.7L191.1,434.6L179.7,427.7Z" fill="#ff1300" stroke="#ff1300"/><path d="M203.3,548.7L218.5,540.4L207.7,427.6L191.1,434.6Z" fill="#f21100" stroke="#f21100"/><path d="M179.7,427.7L191.1,434.6L207.7,427.6L196.2,420.9Z" fill="#e61000" stroke="#e61000"/><path d="M229.6,540.3L240.8,548.4L235.3,478.9L223.5,471.5Z" fill="#7fff00" stroke="#7fff00"/><path d="M240.8,548.4L255.4,540.2L250.7,471.4L235.3,478.9Z" fill="#72f200" stroke="#72f200"/><path d="M223.5,471.5L235.3,478.9L250.7,471.4L238.9,464.2Z" fill="#6ce600" stroke="#6ce600"/><path d="M266.5,540.1L278.3,548.2L275.1,487.4L262.8,479.9Z" fill="#2fff00" stroke="#2fff00"/><path d="M278.3,548.2L292.3,540.0L289.7,479.8L275.1,487.4Z" fill="#2af200" stroke="#2af200"/><path d="M262.8,479.9L275.1,487.4L289.7,479.8L277.4,472.5Z" fill="#28e600" stroke="#28e600"/><path d="M303.4,539.9L315.8,548.0L314.6,501.8L301.8,494.2Z" fill="#00b559" stroke="#00b559"/><path d="M315.8,548.0L329.2,539.8L328.4,494.0L314.6,501.8Z" fill="#00a250" stroke="#00a250"/><path d="M301.8,494.2L314.6,501.8L328.4,494.0L315.6,486.6Z" fill="#009a4c" stroke="#009a4c"/><path d="M340.2,539.7L353.2,547.8L353.3,497.1L339.8,489.5Z" fill="#00df2f" stroke="#00df2f"/><path d="M353.2,547.8L366.0,539.6L366.5,489.4L353.3,497.1Z" fill="#00c82a" stroke="#00c82a"/><path d="M339.8,489.5L353.3,497.1L366.5,489.4L353.1,482.0Z" fill="#00be28" stroke="#00be28"/><path d="M377.1,539.5L390.6,547.6L392.0,499.9L377.9,492.3Z" fill="#00c34b" stroke="#00c34b"/><path d="M390.6,547.6L402.9,539.4L404.6,492.2L392.0,499.9Z" fill="#00af43" stroke="#00af43"/><path d="M377.9,492.3L392.0,499.9L404.6,492.2L390.6,484.8Z" fill="#00a640" stroke="#00a640"/><path d="M413.9,539.3L428.0,547.4L429.9,512.6L415.4,504.8Z" fill="#0049c5" stroke="#0049c5"/><path d="M428.0,547.4L439.7,539.2L441.8,504.7L429.9,512.6Z" fill="#0041b1" stroke="#0041b1"/><path d="M415.4,504.8L429.9,512.6L441.8,504.7L427.4,497.2Z" fill="#003ea8" stroke="#003ea8"/><path d="M450.7,539.1L465.4,547.2L469.8,493.0L454.5,485.5Z" fill="#00ff0e" stroke="#00ff0e"/><path d="M465.4,547.2L476.4,539.0L481.3,485.3L469.8,493.0Z" fill="#00e60d" stroke="#00e60d"/><path d="M454.5,485.5L469.8,493.0L481.3,485.3L466.0,478.1Z" fill="#00da0c" stroke="#00da0c"/><path d="M487.5,538.9L502.7,547.0L509.2,487.8L493.2,480.3Z" fill="#21ff00" stroke="#21ff00"/><path d="M502.7,547.0L513.2,538.8L520.0,480.2L509.2,487.8Z" fill="#1df200" stroke="#1df200"/><path d="M493.2,480.3L509.2,487.8L520.0,480.2L504.1,472.9Z" fill="#1ce600" stroke="#1ce600"/><path d="M245.8,552.0L257.6,560.5L250.9,462.7L238.4,455.3Z" fill="#ffae00" stroke="#ffae00"/><path d="M257.6,560.5L272.2,551.9L266.6,455.2L250.9,462.7Z" fill="#f29c00" stroke="#f29c00"/><path d="M238.4,455.3L250.9,462.7L266.6,455.2L254.1,448.0Z" fill="#e69400" stroke="#e69400"/><path d="M283.5,551.8L295.9,560.3L293.9,510.8L281.1,502.8Z" fill="#00cc42" stroke="#00cc42"/><path d="M295.9,560.3L309.9,551.6L308.4,502.7L293.9,510.8Z" fill="#00b73b" stroke="#00b73b"/><path d="M281.1,502.8L293.9,510.8L308.4,502.7L295.6,495.0Z" fill="#00ae38" stroke="#00ae38"/><path d="M321.2,551.6L334.2,560.1L333.6,511.6L320.2,503.6Z" fill="#00c34b" stroke="#00c34b"/><path d="M334.2,560.1L347.6,551.4L347.5,503.5L333.6,511.6Z" fill="#00af43" stroke="#00af43"/><path d="M320.2,503.6L333.6,511.6L347.5,503.5L334.0,495.8Z" fill="#00a640" stroke="#00a640"/><path d="M358.9,551.4L372.5,559.8L373.3,509.4L359.2,501.4Z" fill="#00d638" stroke="#00d638"/><path d="M372.5,559.8L385.3,551.2L386.5,501.3L373.3,509.4Z" fill="#00c033" stroke="#00c033"/><path d="M359.2,501.4L373.3,509.4L386.5,501.3L372.4,493.6Z" fill="#00b630" stroke="#00b630"/><path d="M396.6,551.2L410.7,559.6L413.0,508.2L398.2,500.2Z" fill="#00df2f" stroke="#00df2f"/><path d="M410.7,559.6L422.9,551.0L425.6,500.1L413.0,508.2Z" fill="#00c82a" stroke="#00c82a"/><path d="M398.2,500.2L413.0,508.2L425.6,500.1L410.9,492.4Z" fill="#00be28" stroke="#00be28"/><path d="M434.2,551.0L449.0,559.4L451.6,523.0L436.4,515.0Z" fill="#0052bc" stroke="#0052bc"/><path d="M449.0,559.4L460.5,550.8L463.4,514.8L451.6,523.0Z" fill="#004aa9" stroke="#004aa9"/><path d="M436.4,515.0L451.6,523.0L463.4,514.8L448.2,507.0Z" fill="#0046a0" stroke="#0046a0"/><path d="M471.8,550.7L487.2,559.2L493.0,500.1L476.9,492.2Z" fill="#18ff00" stroke="#18ff00"/><path d="M487.2,559.2L498.1,550.6L504.4,492.1L493.0,500.1Z" fill="#15f200" stroke="#15f200"/><path d="M476.9,492.2L493.0,500.1L504.4,492.1L488.3,484.5Z" fill="#14e600" stroke="#14e600"/><path d="M509.4,550.5L525.4,559.0L533.0,498.8L516.2,491.0Z" fill="#21ff00" stroke="#21ff00"/><path d="M525.4,559.0L535.7,550.4L543.7,490.9L533.0,498.8Z" fill="#1df200" stroke="#1df200"/><path d="M516.2,491.0L533.0,498.8L543.7,490.9L527.0,483.3Z" fill="#1ce600" stroke="#1ce600"/><path d="M301.3,564.0L314.3,572.8L312.6,512.8L299.1,504.6Z" fill="#18ff00" stroke="#18ff00"/><path d="M314.3,572.8L328.3,563.8L327.3,504.4L312.6,512.8Z" fill="#15f200" stroke="#15f200"/><path d="M299.1,504.6L312.6,512.8L327.3,504.4L313.8,496.4Z" fill="#14e600" stroke="#14e600"/><path d="M378.4,563.5L392.6,572.4L394.3,519.1L379.5,510.8Z" fill="#00e926" stroke="#00e926"/><path d="M392.6,572.4L405.4,563.4L407.5,510.7L394.3,519.1Z" fill="#00d122" stroke="#00d122"/><path d="M379.5,510.8L394.3,519.1L407.5,510.7L392.7,502.6Z" fill="#00c620" stroke="#00c620"/><path d="M416.9,563.3L431.8,572.2L434.9,518.9L419.5,510.6Z" fill="#00e926" stroke="#00e926"/><path d="M431.8,572.2L443.9,563.2L447.5,510.5L434.9,518.9Z" fill="#00d122" stroke="#00d122"/><path d="M419.5,510.6L434.9,518.9L447.5,510.5L432.1,502.4Z" fill="#00c620" stroke="#00c620"/><path d="M493.9,562.9L510.0,571.7L517.5,507.0L500.6,498.9Z" fill="#42ff00" stroke="#42ff00"/><path d="M510.0,571.7L520.8,562.7L528.7,498.7L517.5,507.0Z" fill="#3bf200" stroke="#3bf200"/><path d="M500.6,498.9L517.5,507.0L528.7,498.7L511.9,490.8Z" fill="#38e600" stroke="#38e600"/><path d="M532.4,562.7L549.0,571.5L557.5,513.6L539.9,505.4Z" fill="#05ff00" stroke="#05ff00"/><path d="M549.0,571.5L559.3,562.5L567.9,505.2L557.5,513.6Z" fill="#04f200" stroke="#04f200"/><path d="M539.9,505.4L557.5,513.6L567.9,505.2L550.5,497.3Z" fill="#04e600" stroke="#04e600"/><path d="M339.9,563.8L353.5,572.6L353.5,532.7L339.6,524.2Z" fill="#006ea0" stroke="#006ea0"/><path d="M353.5,572.6L366.9,563.6L367.3,524.1L353.5,532.7Z" fill="#00638f" stroke="#00638f"/><path d="M339.6,524.2L353.5,532.7L367.3,524.1L353.3,515.9Z" fill="#005e88" stroke="#005e88"/><path d="M455.4,563.1L470.9,572.0L475.0,525.4L458.9,517.0Z" fill="#00ac63" stroke="#00ac63"/><path d="M470.9,572.0L482.4,563.0L486.8,516.9L475.0,525.4Z" fill="#009a58" stroke="#009a58"/><path d="M458.9,517.0L475.0,525.4L486.8,516.9L470.8,508.8Z" fill="#009254" stroke="#009254"/><path d="M320.0,576.7L333.6,586.0L332.9,536.1L318.8,527.4Z" fill="#00c34b" stroke="#00c34b"/><path d="M333.6,586.0L347.6,576.6L347.5,527.2L332.9,536.1Z" fill="#00af43" stroke="#00af43"/><path d="M318.8,527.4L332.9,536.1L347.5,527.2L333.4,518.7Z" fill="#00a640" stroke="#00a640"/><path d="M398.9,576.3L413.8,585.6L416.0,538.3L400.5,529.5Z" fill="#00ac63" stroke="#00ac63"/><path d="M413.8,585.6L426.5,576.1L429.1,529.4L416.0,538.3Z" fill="#009a58" stroke="#009a58"/><path d="M400.5,529.5L416.0,538.3L429.1,529.4L413.7,520.9Z" fill="#009254" stroke="#009254"/><path d="M438.3,576.1L453.8,585.3L458.1,528.7L441.9,520.0Z" fill="#00ff0e" stroke="#00ff0e"/><path d="M453.8,585.3L465.9,575.9L470.6,519.8L458.1,528.7Z" fill="#00e60d" stroke="#00e60d"/><path d="M441.9,520.0L458.1,528.7L470.6,519.8L454.4,511.4Z" fill="#00da0c" stroke="#00da0c"/><path d="M517.0,575.6L533.9,584.9L543.9,511.1L525.9,502.6Z" fill="#88ff00" stroke="#88ff00"/><path d="M533.9,584.9L544.6,575.4L555.0,502.5L543.9,511.1Z" fill="#7af200" stroke="#7af200"/><path d="M525.9,502.6L543.9,511.1L555.0,502.5L537.2,494.3Z" fill="#74e600" stroke="#74e600"/><path d="M556.4,575.4L573.9,584.6L582.9,529.6L564.6,520.9Z" fill="#00f21c" stroke="#00f21c"/><path d="M573.9,584.6L583.9,575.2L593.2,520.7L582.9,529.6Z" fill="#00d919" stroke="#00d919"/><path d="M564.6,520.9L582.9,529.6L593.2,520.7L575.0,512.3Z" fill="#00ce18" stroke="#00ce18"/><path d="M359.4,576.5L373.7,585.8L374.4,542.2L359.7,533.3Z" fill="#008b84" stroke="#008b84"/><path d="M373.7,585.8L387.0,576.4L388.2,533.2L374.4,542.2Z" fill="#007c76" stroke="#007c76"/><path d="M359.7,533.3L374.4,542.2L388.2,533.2L373.5,524.6Z" fill="#007670" stroke="#007670"/><path d="M477.7,575.8L493.9,585.1L499.1,535.2L482.3,526.5Z" fill="#00c34b" stroke="#00c34b"/><path d="M493.9,585.1L505.2,575.7L510.8,526.3L499.1,535.2Z" fill="#00af43" stroke="#00af43"/><path d="M482.3,526.5L499.1,535.2L510.8,526.3L494.0,517.9Z" fill="#00a640" stroke="#00a640"/><path d="M420.3,589.6L435.9,599.4L439.0,550.9L422.8,541.6Z" fill="#00b05e" stroke="#00b05e"/><path d="M435.9,599.4L448.5,589.5L452.0,541.5L439.0,550.9Z" fill="#009e54" stroke="#009e54"/><path d="M422.8,541.6L439.0,550.9L452.0,541.5L435.8,532.6Z" fill="#009650" stroke="#009650"/><path d="M460.6,589.4L476.9,599.1L481.9,546.9L464.8,537.7Z" fill="#00d13d" stroke="#00d13d"/><path d="M476.9,599.1L488.9,589.2L494.2,537.6L481.9,546.9Z" fill="#00bb37" stroke="#00bb37"/><path d="M464.8,537.7L481.9,546.9L494.2,537.6L477.2,528.7Z" fill="#00b234" stroke="#00b234"/><path d="M541.3,588.9L558.9,598.6L570.2,526.0L551.4,517.0Z" fill="#76ff00" stroke="#76ff00"/><path d="M558.9,598.6L569.4,588.8L581.1,516.9L570.2,526.0Z" fill="#69f200" stroke="#69f200"/><path d="M551.4,517.0L570.2,526.0L581.1,516.9L562.5,508.2Z" fill="#64e600" stroke="#64e600"/><path d="M581.5,588.7L599.9,598.4L608.7,551.0L589.6,541.8Z" fill="#00a767" stroke="#00a767"/><path d="M599.9,598.4L609.7,588.5L618.7,541.6L608.7,551.0Z" fill="#00965d" stroke="#00965d"/><path d="M589.6,541.8L608.7,551.0L618.7,541.6L599.7,532.7Z" fill="#008e58" stroke="#008e58"/><path d="M379.9,589.9L394.9,599.6L396.0,565.3L380.6,555.9Z" fill="#0031dd" stroke="#0031dd"/><path d="M394.9,599.6L408.2,589.7L409.6,555.7L396.0,565.3Z" fill="#002cc6" stroke="#002cc6"/><path d="M380.6,555.9L396.0,565.3L409.6,555.7L394.3,546.6Z" fill="#002abc" stroke="#002abc"/><path d="M501.0,589.2L517.9,598.9L525.1,541.4L507.3,532.2Z" fill="#00ff0e" stroke="#00ff0e"/><path d="M517.9,598.9L529.2,589.0L536.7,532.1L525.1,541.4Z" fill="#00e60d" stroke="#00e60d"/><path d="M507.3,532.2L525.1,541.4L536.7,532.1L519.0,523.3Z" fill="#00da0c" stroke="#00da0c"/><path d="M484.1,603.4L501.2,613.6L506.9,563.9L489.0,554.2Z" fill="#00b559" stroke="#00b559"/><path d="M501.2,613.6L513.0,603.2L519.0,554.0L506.9,563.9Z" fill="#00a250" stroke="#00a250"/><path d="M489.0,554.2L506.9,563.9L519.0,554.0L501.3,544.6Z" fill="#009a4c" stroke="#009a4c"/><path d="M566.7,602.9L585.2,613.1L597.6,543.2L577.9,533.7Z" fill="#55ff00" stroke="#55ff00"/><path d="M585.2,613.1L595.5,602.7L608.2,533.6L597.6,543.2Z" fill="#4cf200" stroke="#4cf200"/><path d="M577.9,533.7L597.6,543.2L608.2,533.6L588.7,524.5Z" fill="#48e600" stroke="#48e600"/><path d="M607.9,602.6L627.2,612.8L635.5,573.3L615.5,563.5Z" fill="#005cb3" stroke="#005cb3"/><path d="M627.2,612.8L636.8,602.5L645.2,563.3L635.5,573.3Z" fill="#0052a0" stroke="#0052a0"/><path d="M615.5,563.5L635.5,573.3L645.2,563.3L625.4,553.9Z" fill="#004e98" stroke="#004e98"/><path d="M401.4,603.9L417.1,614.1L418.9,578.7L402.7,568.9Z" fill="#0036d8" stroke="#0036d8"/><path d="M417.1,614.1L430.4,603.7L432.4,568.7L418.9,578.7Z" fill="#0030c2" stroke="#0030c2"/><path d="M402.7,568.9L418.9,578.7L432.4,568.7L416.4,559.2Z" fill="#002eb8" stroke="#002eb8"/><path d="M525.4,603.1L543.2,613.3L552.4,550.6L533.5,541.1Z" fill="#18ff00" stroke="#18ff00"/><path d="M543.2,613.3L554.3,603.0L563.8,540.9L552.4,550.6Z" fill="#15f200" stroke="#15f200"/><path d="M533.5,541.1L552.4,550.6L563.8,540.9L545.1,531.7Z" fill="#14e600" stroke="#14e600"/><path d="M508.7,618.1L526.7,628.8L532.9,582.7L514.2,572.4Z" fill="#008f7f" stroke="#008f7f"/><path d="M526.7,628.8L538.4,617.9L544.9,572.3L532.9,582.7Z" fill="#008072" stroke="#008072"/><path d="M514.2,572.4L532.9,582.7L544.9,572.3L526.3,562.4Z" fill="#007a6c" stroke="#007a6c"/><path d="M593.4,617.6L612.9,628.3L627.1,557.4L606.3,547.4Z" fill="#55ff00" stroke="#55ff00"/><path d="M612.9,628.3L623.0,617.4L637.5,547.2L627.1,557.4Z" fill="#4cf200" stroke="#4cf200"/><path d="M606.3,547.4L627.1,557.4L637.5,547.2L616.9,537.6Z" fill="#48e600" stroke="#48e600"/><path d="M635.6,617.3L655.9,628.0L663.3,596.4L642.4,586.0Z" fill="#0010fe" stroke="#0010fe"/><path d="M655.9,628.0L665.2,617.1L672.7,585.9L663.3,596.4Z" fill="#000fe4" stroke="#000fe4"/><path d="M642.4,586.0L663.3,596.4L672.7,585.9L652.0,575.8Z" fill="#000ed8" stroke="#000ed8"/><path d="M551.1,617.8L569.8,628.6L581.1,561.0L561.2,550.9Z" fill="#38ff00" stroke="#38ff00"/><path d="M569.8,628.6L580.7,617.6L592.3,550.8L581.1,561.0Z" fill="#33f200" stroke="#33f200"/><path d="M561.2,550.9L581.1,561.0L592.3,550.8L572.6,541.1Z" fill="#30e600" stroke="#30e600"/><path d="M534.6,633.5L553.6,644.8L560.3,601.9L540.6,591.0Z" fill="#006ea0" stroke="#006ea0"/><path d="M553.6,644.8L565.0,633.4L572.0,590.9L560.3,601.9Z" fill="#00638f" stroke="#00638f"/><path d="M540.6,591.0L560.3,601.9L572.0,590.9L552.5,580.4Z" fill="#005e88" stroke="#005e88"/><path d="M621.4,633.0L642.0,644.3L657.2,576.8L635.3,566.2Z" fill="#2fff00" stroke="#2fff00"/><path d="M642.0,644.3L651.8,632.8L667.2,566.1L657.2,576.8Z" fill="#2af200" stroke="#2af200"/><path d="M635.3,566.2L657.2,576.8L667.2,566.1L645.6,555.9Z" fill="#28e600" stroke="#28e600"/><path d="M664.8,632.7L686.1,644.0L692.2,620.5L670.4,609.5Z" fill="#1919e2" stroke="#1919e2" fill-opacity="0.92" stroke-opacity="0.92"/><path d="M686.1,644.0L695.1,632.5L701.3,609.3L692.2,620.5Z" fill="#1616ca" stroke="#1616ca" fill-opacity="0.92" stroke-opacity="0.92"/><path d="M670.4,609.5L692.2,620.5L701.3,609.3L679.7,598.6Z" fill="#1515bf" stroke="#1515bf" fill-opacity="0.92" stroke-opacity="0.92"/><path d="M578.1,633.3L597.8,644.6L614.7,556.3L593.3,546.0Z" fill="#d8ff00" stroke="#d8ff00"/><path d="M597.8,644.6L608.4,633.1L625.7,545.8L614.7,556.3Z" fill="#c2f200" stroke="#c2f200"/><path d="M593.3,546.0L614.7,556.3L625.7,545.8L604.5,535.9Z" fill="#b8e600" stroke="#b8e600"/><path d="M561.9,649.8L581.9,661.7L590.7,613.2L569.8,601.7Z" fill="#009976" stroke="#009976"/><path d="M581.9,661.7L593.1,649.6L602.2,601.5L590.7,613.2Z" fill="#008969" stroke="#008969"/><path d="M569.8,601.7L590.7,613.2L602.2,601.5L581.5,590.5Z" fill="#008264" stroke="#008264"/><path d="M651.0,649.2L672.6,661.1L688.6,597.9L665.6,586.6Z" fill="#05ff00" stroke="#05ff00"/><path d="M672.6,661.1L682.1,649.1L698.3,586.4L688.6,597.9Z" fill="#04f200" stroke="#04f200"/><path d="M665.6,586.6L688.6,597.9L698.3,586.4L675.5,575.6Z" fill="#04e600" stroke="#04e600"/><path d="M590.7,667.0L611.8,679.6L621.8,631.4L599.7,619.3Z" fill="#008f7f" stroke="#008f7f"/><path d="M611.8,679.6L622.7,666.8L632.9,619.1L621.8,631.4Z" fill="#008072" stroke="#008072"/><path d="M599.7,619.3L621.8,631.4L632.9,619.1L611.1,607.5Z" fill="#007a6c" stroke="#007a6c"/><path d="M621.0,685.1L643.3,698.4L652.7,658.7L629.5,645.8Z" fill="#0044ca" stroke="#0044ca"/><path d="M643.3,698.4L654.0,684.9L663.5,645.6L652.7,658.7Z" fill="#003db5" stroke="#003db5"/><path d="M629.5,645.8L652.7,658.7L663.5,645.6L640.6,633.2Z" fill="#003aac" stroke="#003aac"/><path d="M606.5,649.5L627.3,661.4L648.5,563.5L625.7,552.6Z" fill="#ffff00" stroke="#ffff00"/><path d="M627.3,661.4L637.6,649.3L659.3,552.4L648.5,563.5Z" fill="#f2e800" stroke="#f2e800"/><path d="M625.7,552.6L648.5,563.5L659.3,552.4L636.7,542.0Z" fill="#e6dc00" stroke="#e6dc00"/><path d="M636.4,666.7L658.4,679.2L682.3,581.6L658.2,570.1Z" fill="#ffff00" stroke="#ffff00"/><path d="M658.4,679.2L668.4,666.5L692.6,569.9L682.3,581.6Z" fill="#f0f200" stroke="#f0f200"/><path d="M658.2,570.1L682.3,581.6L692.6,569.9L668.8,558.8Z" fill="#e4e600" stroke="#e4e600"/></g></svg><!--/CHART-->
</body></html>
